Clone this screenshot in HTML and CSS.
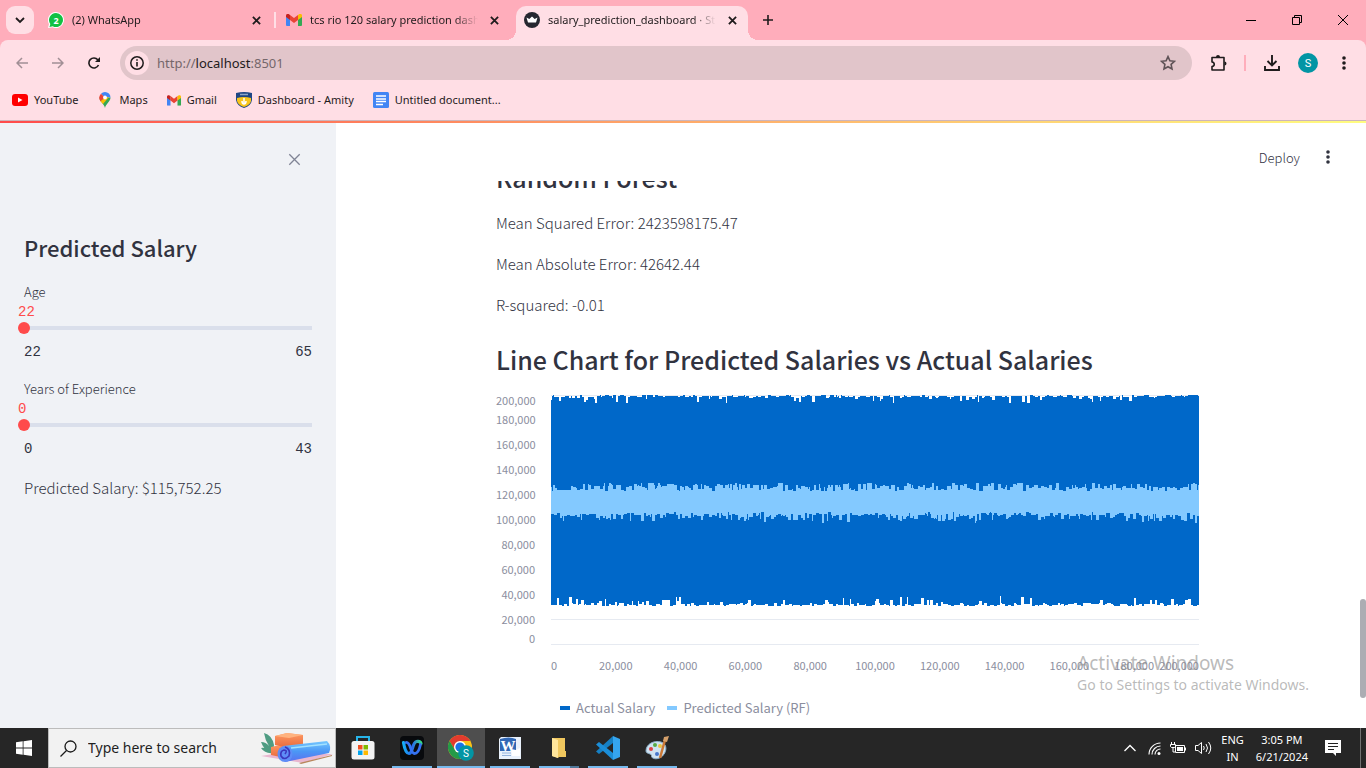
FILE: index.html
```html
<!DOCTYPE html>
<html lang="en">
<head>
<meta charset="utf-8">
<title>salary_prediction_dashboard</title>
<link rel="stylesheet" href="styles.css">
</head>
<body>
<svg class="defs" aria-hidden="true">
  <symbol id="x" viewBox="0 0 10 10"><path d="M1 1l8 8M9 1L1 9" fill="none" stroke="currentColor"/></symbol>
  <symbol id="gmail" viewBox="0 0 16 12"><path d="M0 2v9a1 1 0 0 0 1 1h3V5z" fill="#4285f4"/><path d="M16 2v9a1 1 0 0 1-1 1h-3V5z" fill="#34a853"/><path d="M4 .9l4 3 4-3V6L8 9 4 6z" fill="#ea4335"/><path d="M0 1.6C0 0 1.8-.6 3 .2l1 .7V6L0 3z" fill="#c5221f"/><path d="M16 1.6C16 0 14.200-.6 13 .2l-1 .7V6l4-3z" fill="#fbbc04"/></symbol>
  <symbol id="dots" viewBox="0 0 4 14"><g fill="currentColor"><circle cx="2" cy="2" r="1.800"/><circle cx="2" cy="7" r="1.800"/><circle cx="2" cy="12" r="1.800"/></g></symbol>
</svg>

<header class="tabstrip">
  <button class="tab-search" aria-label="Search tabs"><svg width="10" height="10" viewBox="0 0 10 10"><path d="M1 3l4 4 4-4" fill="none" stroke="currentColor" stroke-width="1.800"/></svg></button>
  <div class="tab">
    <svg width="16" height="16" viewBox="0 0 16 16"><path d="M8 0a8 8 0 1 1-3.500 15.200L0 16l1-4A8 8 0 0 1 8 0z" fill="#fff"/><path d="M8 1a7 7 0 1 1-3.300 13.200L1.500 15l.8-3A7 7 0 0 1 8 1z" fill="#12c143"/><text x="8" y="11.500" text-anchor="middle" class="badge-text">2</text></svg>
    <span class="tab-title">(2) WhatsApp</span>
    <button class="close" aria-label="Close tab"><svg width="9" height="9"><use href="#x"/></svg></button>
  </div>
  <div class="tab divided">
    <svg width="16" height="12"><use href="#gmail"/></svg>
    <span class="tab-title">tcs rio 120 salary prediction dashboard</span>
    <button class="close" aria-label="Close tab"><svg width="9" height="9"><use href="#x"/></svg></button>
  </div>
  <div class="tab active">
    <svg width="16" height="16" viewBox="0 0 16 16"><circle cx="8" cy="8" r="8" fill="#262730"/><path d="M2.500 5.500l2.800 1.600L8 4.500l2.700 2.600 2.800-1.600L12 10.500H4z" fill="#fff"/></svg>
    <span class="tab-title">salary_prediction_dashboard · Streamlit</span>
    <button class="close" aria-label="Close tab"><svg width="9" height="9"><use href="#x"/></svg></button>
  </div>
  <button class="new-tab" aria-label="New tab"><svg width="10" height="10" viewBox="0 0 10 10"><path d="M5 0v10M0 5h10" stroke="currentColor" stroke-width="1.600"/></svg></button>
  <div class="window-controls">
    <button aria-label="Minimize"><svg width="10" height="10" viewBox="0 0 10 10"><path d="M0 5.500h10" stroke="#000"/></svg></button>
    <button aria-label="Restore"><svg width="10" height="10" viewBox="0 0 10 10"><path d="M.5 2.500h7v7h-7zM2.500 2.500v-2h7v7h-2" fill="none" stroke="#000"/></svg></button>
    <button aria-label="Close"><svg width="10" height="10" viewBox="0 0 10 10"><path d="M0 0l10 10M10 0L0 10" stroke="#000"/></svg></button>
  </div>
</header>

<div class="chrome">
  <div class="toolbar">
    <button class="nav faded" aria-label="Back"><svg width="12" height="12" viewBox="0 0 12 12"><path d="M12 6H1M6 1L1 6l5 5" fill="none" stroke="currentColor" stroke-width="1.500"/></svg></button>
    <button class="nav faded" aria-label="Forward"><svg width="12" height="12" viewBox="0 0 12 12"><path d="M0 6h11M6 1l5 5-5 5" fill="none" stroke="currentColor" stroke-width="1.500"/></svg></button>
    <button class="nav" aria-label="Reload"><svg width="12" height="12" viewBox="0 0 12 12"><path d="M10.500 8A5 5 0 1 1 9.800 2.800L11 4" fill="none" stroke="currentColor" stroke-width="1.600"/><path d="M12 0v5H7z" fill="currentColor"/></svg></button>
    <div class="omnibox">
      <button class="site-info" aria-label="Site information"><svg width="14" height="14" viewBox="0 0 14 14"><circle cx="7" cy="7" r="6.200" fill="none" stroke="currentColor" stroke-width="1.500"/><path d="M7 6v4.500M7 3.200v1.600" stroke="currentColor" stroke-width="1.600"/></svg></button>
      <a class="url" href="http://localhost:8501">http://<b>localhost</b>:8501</a>
      <button class="star" aria-label="Bookmark"><svg width="16" height="16" viewBox="0 0 16 16"><path d="M8 1.600l1.900 4.200 4.600.5-3.400 3.100.9 4.600L8 11.700 4 14l.9-4.600L1.500 6.300l4.600-.5z" fill="none" stroke="#5f5357" stroke-width="1.600"/></svg></button>
    </div>
    <button class="ext" aria-label="Extensions"><svg width="17" height="17" viewBox="0 0 17 17"><path d="M2 2.500h12V15H2v-3.500c3-.5 3-4 0-4.500z" fill="none" stroke="currentColor" stroke-width="1.600" stroke-linejoin="round"/><path d="M6 2a2 2 0 0 1 4 0zM14.500 6.500a2 2 0 0 1 0 4z" fill="currentColor"/></svg></button>
    <i class="rule"></i>
    <button class="download" aria-label="Downloads"><svg width="16" height="16" viewBox="0 0 16 16"><path d="M8 0v10M3.500 6L8 10.500 12.500 6M1 11v4h14v-4" fill="none" stroke="currentColor" stroke-width="1.900"/></svg></button>
    <button class="avatar">S</button>
    <button class="menu" aria-label="Menu"><svg width="4" height="14"><use href="#dots"/></svg></button>
  </div>
  <nav class="bookmarks">
    <a href="#"><svg width="16" height="12" viewBox="0 0 16 12"><rect width="16" height="12" rx="3" fill="#f00"/><path d="M6 3.500v5L10.500 6z" fill="#fff"/></svg>YouTube</a>
    <a href="#" class="maps"><svg width="16" height="16" viewBox="0 0 16 16"><path d="M8 16C7.300 12 2.500 9.500 2.500 5.500h11C13.500 9.500 8.700 12 8 16z" fill="#34a853"/><path d="M8 0a5.500 5.500 0 0 1 5.500 5.500L8 5.500 4 1.700A5.500 5.500 0 0 1 8 0z" fill="#4285f4"/><path d="M4 1.700l4 3.800-4.300 4A6 6 0 0 1 4 1.700z" fill="#ea4335"/><path d="M8 5.500L3.500 9.200 6 12l6-7z" fill="#fbbc04"/><circle cx="8" cy="5.500" r="1.900" fill="#fff"/></svg>Maps</a>
    <a href="#"><svg width="14" height="11" viewBox="0 0 16 12"><use href="#gmail"/></svg>Gmail</a>
    <a href="#"><svg width="16" height="16" viewBox="0 0 16 16"><path d="M0 1q8-2 16 0v7q-1 6-8 8-7-2-8-8z" fill="#1f4685"/><path d="M1 6q7-2 14 0v3q-1 4-7 6-6-2-7-6z" fill="#f9c51b"/><path d="M4 2.500h8" stroke="#8fa6c8" stroke-width="1.500"/><path d="M8 6v6M6 9q0 3 2 3t2-3" fill="none" stroke="#fff" stroke-width="1.500"/></svg>Dashboard - Amity</a>
    <a href="#"><svg width="16" height="16" viewBox="0 0 16 16"><rect width="16" height="16" rx="1.500" fill="#4285f4"/><path d="M3 4h10M3 7h10M3 9.500h10M3 12.500h7" stroke="#fff" stroke-width="1.300"/></svg>Untitled document...</a>
  </nav>
</div>

<div class="app">
  <aside class="sidebar">
    <button class="collapse" aria-label="Close sidebar"><svg width="13" height="13"><use href="#x"/></svg></button>
    <h2>Predicted Salary</h2>
    <div class="slider">
      <label for="age">Age</label>
      <output for="age">22</output>
      <input id="age" type="range" min="22" max="65" value="22">
      <div class="limits"><span>22</span><span>65</span></div>
    </div>
    <div class="slider">
      <label for="years">Years of Experience</label>
      <output for="years">0</output>
      <input id="years" type="range" min="0" max="43" value="0">
      <div class="limits"><span>0</span><span>43</span></div>
    </div>
    <p>Predicted Salary: $115,752.25</p>
  </aside>
  <main class="main">
    <div class="app-header">
      <button class="deploy">Deploy</button>
      <button class="app-menu" aria-label="Main menu"><svg width="4" height="14"><use href="#dots"/></svg></button>
    </div>
    <div class="viewport">
      <section class="block">
        <h2 class="model">Random Forest</h2>
        <p>Mean Squared Error: 2423598175.47</p>
        <p>Mean Absolute Error: 42642.44</p>
        <p>R-squared: -0.01</p>
        <h2 class="chart-title">Line Chart for Predicted Salaries vs Actual Salaries</h2>
        <figure class="chart">
          <div class="y-axis"><span>200,000</span><span>180,000</span><span>160,000</span><span>140,000</span><span>120,000</span><span>100,000</span><span>80,000</span><span>60,000</span><span>40,000</span><span>20,000</span><span>0</span></div>
          <svg id="plot" class="plot" viewBox="0 0 648 250" preserveAspectRatio="none" role="img" aria-label="Actual and predicted salaries">
            <path d="M0 .5h648M0 224.500h648M0 249.500h648" stroke="#e6eaf1"/>
            <path id="actual" fill="#0068c9"/>
            <path id="predicted" fill="#83c9ff"/>
          </svg>
          <div class="x-axis"><span>0</span><span>20,000</span><span>40,000</span><span>60,000</span><span>80,000</span><span>100,000</span><span>120,000</span><span>140,000</span><span>160,000</span><span>180,000</span><span>200,000</span></div>
          <figcaption class="legend"><span class="actual">Actual Salary</span><span class="predicted">Predicted Salary (RF)</span></figcaption>
        </figure>
      </section>
    </div>
    <i class="scroll-thumb"></i>
    <div class="watermark"><strong>Activate Windows</strong><span>Go to Settings to activate Windows.</span></div>
  </main>
</div>

<footer class="taskbar">
  <button class="start" aria-label="Start"><svg width="16" height="16" viewBox="0 0 16 16"><path d="M0 2.200L6.700 1.300v6.300H0zM7.500 1.200L16 0v7.600H7.500zM0 8.400h6.700v6.300L0 13.800zM7.500 8.400H16V16l-8.500-1.200z" fill="#fff"/></svg></button>
  <label class="search">
    <svg width="17" height="17" viewBox="0 0 17 17"><circle cx="10.500" cy="6.500" r="5.500" fill="none" stroke="#1a1a1a" stroke-width="1.300"/><path d="M6.500 10.500L.5 16.500" stroke="#1a1a1a" stroke-width="1.300"/></svg>
    <input type="text" placeholder="Type here to search" aria-label="Type here to search">
    <svg class="art" width="72" height="34" viewBox="0 0 72 34">
      <defs><linearGradient id="mat" x2="0" y2="1"><stop stop-color="#75c8ff"/><stop offset=".5" stop-color="#4b97f5"/><stop offset="1" stop-color="#5a6ff0"/></linearGradient><linearGradient id="brick" x2="0" y2="1"><stop stop-color="#ff9a63"/><stop offset="1" stop-color="#e8693c"/></linearGradient></defs>
      <path d="M0 25l12-2 60 0-30 9z" fill="#e9b6cf"/><path d="M38 32l33-8v1L40 33z" fill="#b8875c"/>
      <path d="M3 2q8 2 10 12l-1 8Q3 20 0 11q5 0 8 4Q4 9 3 2zM0 17q6-1 12 5-8 1-12-5z" fill="#4f9c82"/>
      <path d="M10 16l14-3 6 2v10l-6 2-14-3z" fill="url(#brick)"/><path d="M14 5l12-3 16 2v10l-14 3-14-3z" fill="url(#brick)"/><path d="M14 5l12-3 16 2-14 3z" fill="#ffb37f"/>
      <path d="M22 15l44-5q5 5 2 12l-44 9z" fill="url(#mat)"/><ellipse cx="24" cy="23" rx="7.500" ry="8" fill="#5e8df7"/><path d="M24 23q3-4-1-4-4 1-3 6 3 5 8 0 2-7-4-9" fill="none" stroke="#3b36bd" stroke-width="1.600"/><path d="M30 17l36-4" stroke="#a3e2ff" stroke-width="1.500"/>
    </svg>
  </label>
  <div class="apps">
    <button aria-label="Store"><svg width="24" height="24" viewBox="0 0 24 24"><path d="M6 6V1h12v5" fill="none" stroke="#27b5ea" stroke-width="2"/><rect x=".5" y="5" width="23" height="18.500" rx="2.500" fill="#f3f3f3"/><path d="M7 9h4.500v4.500H7z" fill="#f25022"/><path d="M12.500 9H17v4.500h-4.500z" fill="#7fba00"/><path d="M7 14.500h4.500V19H7z" fill="#00a4ef"/><path d="M12.500 14.500H17V19h-4.500z" fill="#ffb900"/></svg></button>
    <button class="open" aria-label="Webex"><svg width="24" height="24" viewBox="0 0 24 24"><defs><linearGradient id="webex"><stop stop-color="#15aef5"/><stop offset=".5" stop-color="#2865ee"/><stop offset="1" stop-color="#37dc86"/></linearGradient></defs><rect width="24" height="24" rx="4" fill="#080a0d"/><path d="M3.500 6.500c1 6 2.500 11 5.500 11 4 0 3-11 7.500-12 2.500-.5 4 .5 4.500 2" fill="none" stroke="url(#webex)" stroke-width="3.200" stroke-linecap="round"/><path d="M6 6.500c5-1 4 11 8.500 11 3.500 0 5-4 6-9" fill="none" stroke="#3572f2" stroke-width="2.800" stroke-linecap="round"/></svg></button>
    <button class="open current" aria-label="Chrome"><svg width="26" height="26" viewBox="0 0 26 26"><circle cx="12" cy="12" r="12" fill="#fbc116"/><path d="M1.600 6A12 12 0 0 1 22.400 6H12L7 15z" fill="#e33b2e"/><path d="M1.600 6A12 12 0 0 0 12 24l5-9H7z" fill="#249a48"/><circle cx="12" cy="12" r="6" fill="#fff"/><circle cx="12" cy="12" r="4.600" fill="#1a73e8"/><circle cx="18" cy="18" r="7.800" fill="#0295a4"/><text x="18" y="22" text-anchor="middle" class="profile-text">S</text></svg></button>
    <button class="open" aria-label="Word"><svg width="22" height="22" viewBox="0 0 22 22"><path d="M2 0h20v22H0V2z" fill="#e9f1fb"/><path d="M1 2q9-3 16 0v12H1z" fill="#3268b5"/><text x="9" y="14" text-anchor="middle" class="word-text">W</text><path d="M12 12l5 1 4-2v8h-8z" fill="#fff"/><path d="M3 16h9M3 18.500h9" stroke="#94b4de"/></svg></button>
    <button class="open split" aria-label="File Explorer"><svg width="14" height="20" viewBox="0 0 14 20"><path d="M0 0h13v13h1v6H7l-1 1-6-2z" fill="#f0c75e"/><path d="M0 0l6 2v18l-6-2z" fill="#ffe59b"/></svg></button>
    <button class="open" aria-label="Visual Studio Code"><svg width="24" height="24" viewBox="0 0 24 24"><path d="M17 0v7L3 18l-3-2.500L17 0z" fill="#1680c4"/><path d="M0 8.500L3 6l14 11v7z" fill="#1b8ed8"/><path d="M17 0l7 3v18l-7 3z" fill="#35a5ef"/></svg></button>
    <button class="open" aria-label="Paint"><svg width="24" height="24" viewBox="0 0 24 24"><path d="M1 15C1 8 9 4 16 6c7 2 5 10 3 12-2 4-8 6-11 4-3-1 0-3-3-4-2-1-4-1-4-3z" fill="#cfe3f2" stroke="#8eb1cb"/><circle cx="6" cy="13" r="2" fill="#dd4242"/><circle cx="10" cy="9" r="2" fill="#57aa46"/><circle cx="15" cy="10" r="2" fill="#ecc440"/><circle cx="12" cy="18" r="2" fill="#4677cd"/><path d="M20 4l-5 18" stroke="#cb7938" stroke-width="2.500"/><path d="M18 5l1-4 5-1-2 6z" fill="#d5a06b"/></svg></button>
  </div>
  <div class="tray">
    <svg width="12" height="8" viewBox="0 0 12 8"><path d="M.5 7L6 1.500 11.500 7" fill="none" stroke="#fff" stroke-width="1.300"/></svg>
    <svg width="13" height="13" viewBox="0 0 13 13"><g fill="none" stroke="#fff" stroke-width="1.100"><path d="M1 12.500A11.500 11.500 0 0 1 12.500 1M4 12.500A8.500 8.500 0 0 1 12.500 4M7 12.500A5.500 5.500 0 0 1 12.500 7"/></g><circle cx="11" cy="11.500" r="1.500" fill="#fff"/></svg>
    <svg width="16" height="12" viewBox="0 0 16 12"><path d="M5.500 3.500h9v7h-9zM15.500 5.500v3" fill="none" stroke="#fff"/><path d="M7 5h6v4H7z" fill="#fff"/><path d="M1.500 0v2.500M4.500 0v2.500M.5 2.500h5v2l-1 1h-3l-1-1zM3 5v5h2" fill="none" stroke="#fff"/></svg>
    <svg width="17" height="14" viewBox="0 0 17 14"><g fill="none" stroke="#fff"><path d="M.5 4.500H3l3.500-3v11L3 9.500H.5zM8.500 5q1.500 2 0 4M11 3q3 4 0 8M13.500 1q4.500 6 0 12"/></g></svg>
    <div class="stack lang">ENG<br>IN</div>
    <div class="stack clock">3:05 PM<br>6/21/2024</div>
    <svg width="16" height="16" viewBox="0 0 16 16"><path d="M0 0h16v13h-5v3l-3-3H0z" fill="#fff"/><path d="M3 3.500h10M3 6.500h10M3 9.500h6" stroke="#222"/></svg>
    <i class="peek"></i>
  </div>
</footer>
<script src="chart.js"></script>
</body>
</html>
```
FILE: styles.css
```css
* { box-sizing: border-box; }
body { margin: 0; height: 100vh; display: flex; flex-direction: column; overflow: hidden; font-family: "Open Sans", "Noto Sans", sans-serif; color: #1f1b1c; }
button { border: 0; padding: 0; margin: 0; background: none; color: inherit; font: inherit; display: flex; align-items: center; justify-content: center; flex: none; }
a { color: inherit; text-decoration: none; }
svg { display: block; flex: none; }
h2, p, figure { margin: 0; }
.defs { position: absolute; width: 0; height: 0; }

.tabstrip { flex: none; height: 40px; display: flex; align-items: flex-end; background: #ffadbb; padding-left: 6px; font-size: 12px; }
.tabstrip .tab-search { width: 28px; height: 28px; border-radius: 9px; background: #ffdee5; margin-bottom: 6px; }
.tab { width: 238px; height: 34px; display: flex; align-items: center; gap: 8px; padding: 0 8px 6px 14px; position: relative; }
.tab-title { flex: 1; overflow: hidden; white-space: nowrap; font-family: "Noto Sans", sans-serif; font-size: 11px; line-height: 16px; mask-image: linear-gradient(to right, #000 calc(100% - 24px), transparent); }
.close { width: 16px; height: 16px; stroke-width: 2; }
.divided::before { content: ""; position: absolute; left: 2px; top: 6px; width: 2px; height: 16px; background: #ffdee5; }
.active { width: 232px; margin-left: 6px; padding: 0 8px 6px; background: #ffdee5; border-radius: 10px 10px 0 0; }
.active::before, .active::after { content: ""; position: absolute; bottom: 0; width: 10px; height: 10px; }
.active::before { left: -10px; background: radial-gradient(circle at 0 0, transparent 10px, #ffdee5 10px); }
.active::after { right: -10px; background: radial-gradient(circle at 100% 0, transparent 10px, #ffdee5 10px); }
.new-tab { width: 40px; height: 40px; }
.window-controls { display: flex; margin-left: auto; }
.window-controls button { width: 46px; height: 40px; }
.badge-text { font: bold 9px "Open Sans", sans-serif; fill: #fff; }

.chrome { flex: none; background: #ffdee5; border-radius: 8px 8px 0 0; border-bottom: 1px solid #cdb5bb; box-shadow: 0 -8px 0 #ffadbb; height: 81px; position: relative; z-index: -1; }
.toolbar { height: 46px; display: flex; align-items: center; padding: 0 20px 0 4px; }
.nav { width: 36px; height: 32px; }
.faded { color: #a18f95; }
.omnibox { flex: 1; height: 34px; margin-left: 8px; display: flex; align-items: center; padding: 0 16px 0 5px; border-radius: 17px; background: #e1c5ca; }
.site-info { width: 24px; height: 24px; border-radius: 50%; background: #ffdee5; }
.url { margin-left: 8px; flex: 1; font: 13px/18px "Noto Sans", sans-serif; color: #75676b; }
.url b { font-weight: 400; color: #1f1b1c; }
.ext { margin-left: 18px; }
.rule { width: 2px; height: 16px; background: #ffadbb; margin: 0 18px 0 17px; }
.avatar { width: 20px; height: 20px; border-radius: 50%; margin: 0 24px 0 18px; background: #0295a4; color: #fff; font: 11px Roboto, sans-serif; }
.bookmarks { height: 28px; display: flex; align-items: center; gap: 19px; padding-left: 12px; font: 11px/16px "Noto Sans", sans-serif; }
.bookmarks a { display: flex; align-items: center; gap: 6px; }

.app { flex: 1; min-height: 0; display: flex; position: relative; font-family: "Noto Sans CJK SC", "Source Sans Pro", sans-serif; color: #31333f; }
.app::before { content: ""; position: absolute; z-index: 2; top: 0; left: 0; right: 0; height: 2px; background: linear-gradient(to right, #ff4b4b, #ffa167 45%, #fffd80); }
.sidebar { flex: none; width: 336px; background: #f0f2f6; padding: 30px 24px; display: flex; flex-direction: column; }
.collapse { align-self: flex-end; width: 16px; height: 16px; margin-right: 10px; color: #808495; stroke-width: 1; }
.sidebar h2 { font-size: 22px; line-height: 30px; font-weight: 500; margin: 65px 0 20px; }
.slider { display: flex; flex-direction: column; margin-bottom: 18px; }
.slider label { font-size: 13px; line-height: 20px; font-weight: 300; }
.slider output { font: 14px/18px "Liberation Mono", monospace; color: #ff4b4b; margin: 1px 0 0 -6px; }
.slider input { appearance: none; height: 12px; margin: 1px -6px; background: linear-gradient(#dadfeb, #dadfeb) center / calc(100% - 12px) 4px no-repeat; }
.slider input::-webkit-slider-thumb { appearance: none; width: 12px; height: 12px; border-radius: 50%; background: #ff4b4b; }
.limits { display: flex; justify-content: space-between; margin-top: 8px; font: 14px/18px "Liberation Mono", monospace; }
.sidebar p { font-size: 15px; line-height: 24px; font-weight: 300; }

.main { flex: 1; min-width: 0; position: relative; display: flex; flex-direction: column; background: #fff; }
.app-header { flex: none; height: 60px; display: flex; align-items: center; justify-content: flex-end; gap: 26px; padding: 12px 36px 0 0; font-size: 13px; }
.deploy { font-weight: 300; }
.viewport { flex: 1; min-height: 0; overflow: hidden; padding-right: 6px; }
.block { max-width: 704px; margin: 0 auto; }
.block h2 { font-size: 25px; line-height: 34px; font-weight: 500; }
.block .model { margin: -21px 0 17px; }
.block p { font-size: 15px; line-height: 24px; margin-bottom: 17px; font-weight: 300; }
.block .chart-title { margin: 25px 0 19px; }
.chart { display: grid; grid-template-columns: 39px 1fr; column-gap: 16px; padding-right: 1px; font-size: 11px; color: #8b8e9e; }
.y-axis { display: flex; flex-direction: column; text-align: right; height: 250px; }
.y-axis span { height: 25px; line-height: 25px; }
.y-axis span:first-child { height: 12px; line-height: 10px; }
.y-axis span:last-child { height: 13px; line-height: 13px; }
.plot { width: 100%; height: 250px; }
.x-axis { grid-column: 2; display: flex; margin-top: 12px; line-height: 16px; }
.x-axis span { flex: 2 1 0; min-width: 0; display: flex; justify-content: center; }
.x-axis span:first-child { flex-grow: 1; justify-content: flex-start; }
.x-axis span:last-child { flex-grow: 1; justify-content: flex-end; }
.legend { grid-column: 2; display: flex; gap: 12px; margin-top: 25px; padding-left: 9px; font-size: 13px; line-height: 20px; }
.legend span { display: flex; align-items: center; gap: 6px; }
.legend span::before { content: ""; width: 10px; height: 4px; background: #0068c9; }
.legend .predicted::before { background: #83c9ff; }
.scroll-thumb { position: absolute; right: 0; bottom: 30px; width: 6px; height: 99px; border-radius: 3px; background: #acadb3; }
.watermark { position: absolute; right: 57px; bottom: 33px; display: flex; flex-direction: column; font-family: "Noto Sans", sans-serif; color: rgba(140, 140, 140, .6); }
.watermark strong { font-weight: 400; font-size: 19px; line-height: 24px; }
.watermark span { font-size: 14px; line-height: 20px; }

.taskbar { flex: none; height: 40px; display: flex; background: #262626; color: #fff; }
.start { width: 48px; }
.search { width: 288px; display: flex; align-items: center; padding-left: 11px; background: #f2f2f2; border: 1px solid #bcbcbc; }
.search input { flex: 1; min-width: 0; border: 0; padding: 0 0 0 11px; background: none; font: 14px/20px "Noto Sans", sans-serif; }
.search input::placeholder { color: #1f1f1f; opacity: 1; }
.art { margin-right: 2px; }
.apps { display: flex; gap: 1px; padding-left: 3px; }
.apps button { width: 48px; height: 40px; position: relative; }
.apps .open::after { content: ""; position: absolute; left: 4px; right: 4px; bottom: 0; height: 2px; background: #76b9ed; }
.apps .current { background: #4e4e4e; }
.apps .current::after { left: 0; right: 0; }
.apps .split::after { background: linear-gradient(to right, #76b9ed 31px, #50789a 31px); }
.profile-text { font: 10px Roboto, sans-serif; fill: #fff; }
.word-text { font: bold 15px "Liberation Serif", serif; fill: #fff; }
.tray { margin-left: auto; display: flex; align-items: center; gap: 9px; padding-right: 5px; }
.tray svg:first-child { margin-right: 3px; }
.stack { text-align: center; line-height: 17px; font-family: "Noto Sans", sans-serif; font-size: 11px; }
.clock { margin: 0 8px 0 3px; }
.peek { width: 1px; height: 40px; background: #707070; margin-left: 10px; }
```
FILE: chart.js
```js
// Draws the dense salary series as one jagged band per series.
let seed = 41;
function random() {
  seed = (seed * 1664525 + 1013904223) % 4294967296;
  return seed / 4294967296;
}

const spike = (power, reach) => Math.round(Math.pow(random(), power) * reach);

// One edge of a band: short flat runs of one to three pixels.
function edge(value) {
  const points = [];
  for (let x = 0; x < 648;) {
    const end = Math.min(x + 1 + Math.floor(random() * 3), 648);
    const y = value();
    points.push([x, y], [end, y]);
    x = end;
  }
  return points;
}

function band(top, bottom) {
  const outline = edge(top).concat(edge(bottom).reverse());
  return "M" + outline.map((point) => point.join(" ")).join("L") + "Z";
}

document.getElementById("actual").setAttribute("d",
  band(() => spike(1, 2) + spike(9, 7), () => 211 - spike(1, 2) - spike(9, 9)));
document.getElementById("predicted").setAttribute("d",
  band(() => 88 + spike(1, 8), () => 120 + spike(3, 8) - spike(2, 3)));
```
